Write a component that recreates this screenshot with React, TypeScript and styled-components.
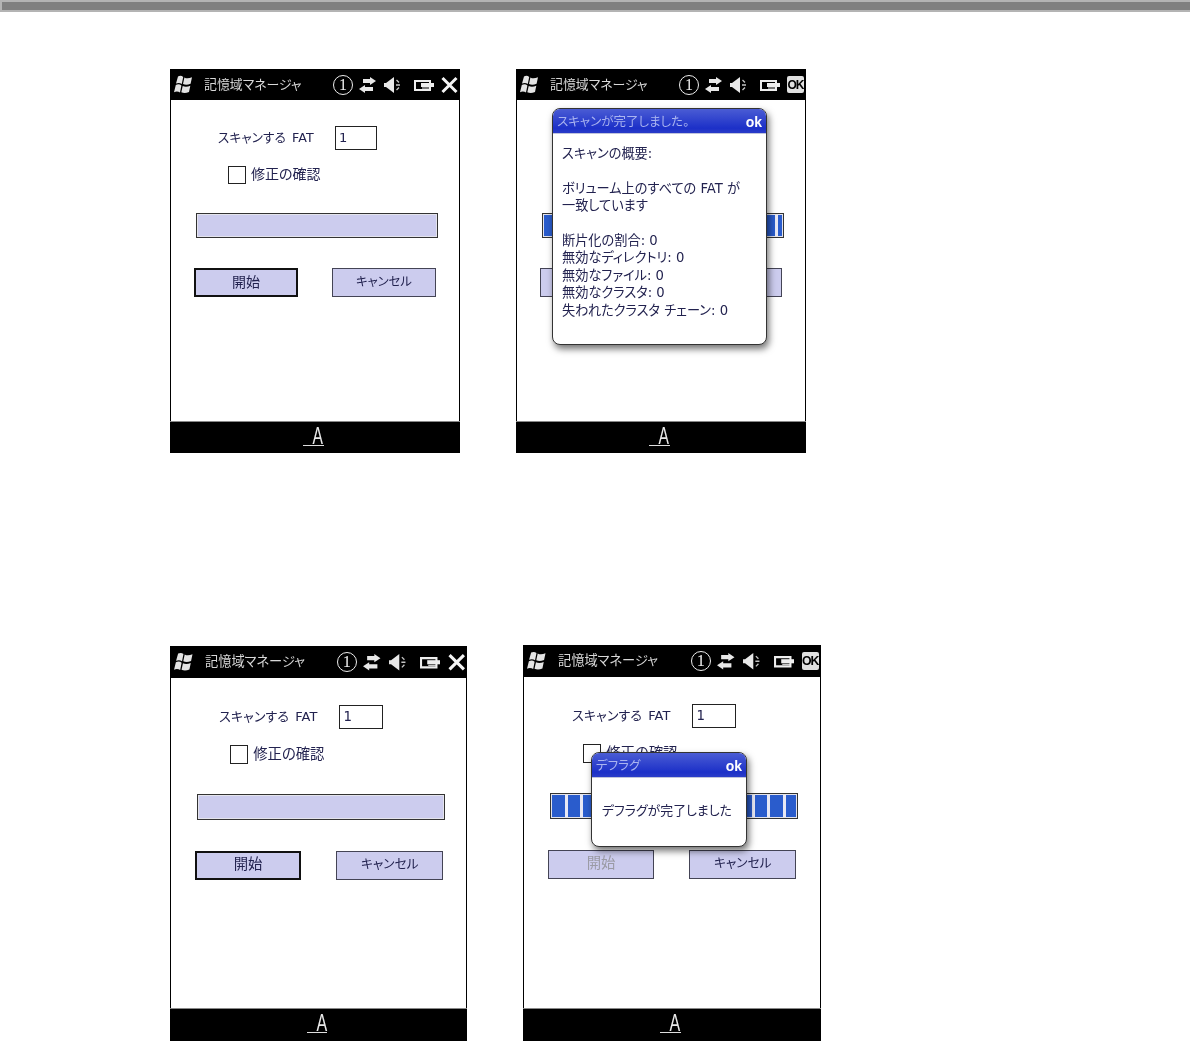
import React from 'react';
import styled, { createGlobalStyle, css } from 'styled-components';

const Global = createGlobalStyle`
  html, body { margin: 0; padding: 0; background: #fff; overflow: hidden; }
  body { font-family: "DejaVu Sans", "Noto Sans CJK JP", sans-serif; }
`;

const u = (n: number) => `calc(var(--s) * ${n}px)`;

const Page = styled.div`
  width: 1190px;
  height: 1041px;
  overflow: hidden;
`;
const TopBar = styled.div`
  height: 8px;
  background: #808080;
  border: 2px solid #b4b4b4;
  border-right: none;
`;
const PhoneRow = styled.div<{ $top: number; $gap: number }>`
  display: flex;
  align-items: flex-end;
  padding-left: 170px;
  margin-top: ${p => p.$top}px;
  gap: ${p => p.$gap}px;
`;
const Phone = styled.div<{ $w: number; $h: number; $s: number }>`
  --s: ${p => p.$s};
  position: relative;
  flex: none;
  display: flex;
  flex-direction: column;
  width: ${p => p.$w}px;
  height: ${p => p.$h}px;
  background: #fff;
  filter: blur(0.45px);
  font-feature-settings: "palt";
  font-size: ${u(14)};
  line-height: ${u(18)};
  color: #22224f;
`;
const Header = styled.div`
  flex: none;
  height: ${u(31)};
  background: #000;
  display: flex;
  align-items: center;
  color: #d8d8d8;
`;
const Flag = styled.svg`
  width: ${u(20)};
  height: ${u(19)};
  margin-left: ${u(3)};
`;
const Title = styled.span`
  margin-left: ${u(11)};
  flex: 1;
  font-size: ${u(12.9)};
  white-space: nowrap;
`;
const Circled = styled.span`
  box-sizing: border-box;
  width: ${u(20)};
  height: ${u(20)};
  border: 1.5px solid #eee;
  border-radius: 50%;
  display: flex;
  align-items: center;
  justify-content: center;
  color: #eee;
  font-family: "Liberation Serif", serif;
  font-size: ${u(16)};
  line-height: 1;
`;
const StatusIcon = styled.svg<{ $w: number; $ml: number; $mr?: number }>`
  width: ${p => u(p.$w)};
  height: ${u(18)};
  margin-left: ${p => u(p.$ml)};
  margin-right: ${p => u(p.$mr ?? 0)};
`;
const OkBadge = styled.span`
  width: ${u(17)};
  height: ${u(17)};
  margin: 0 ${u(2)} 0 ${u(7)};
  background: #e0e0e0;
  border-radius: 2px;
  color: #000;
  font: 700 ${u(12)} "Liberation Sans", sans-serif;
  letter-spacing: -1px;
  display: flex;
  align-items: center;
  justify-content: center;
`;
const Body = styled.div`
  flex: 1;
  min-height: 0;
  border-left: 1px solid #000;
  border-right: 1px solid #000;
  display: flex;
  flex-direction: column;
  align-items: flex-start;
`;
const FatRow = styled.div`
  display: flex;
  align-items: center;
  margin: ${u(26)} 0 0 ${u(47)};
  gap: ${u(21)};
`;
const FatLabel = styled.span`
  width: ${u(96)};
  white-space: nowrap;
  font-size: ${u(12.6)};
  word-spacing: ${u(2)};
  letter-spacing: 0.1px;
`;
const FatInput = styled.div`
  box-sizing: border-box;
  width: ${u(42)};
  height: ${u(24)};
  border: 1px solid #222;
  padding-left: ${u(3)};
  line-height: ${u(22)};
  font-size: ${u(13)};
`;
const CheckRow = styled.div`
  display: flex;
  align-items: center;
  margin: ${u(15)} 0 0 ${u(57)};
  gap: ${u(5)};
`;
const Check = styled.span`
  box-sizing: border-box;
  width: ${u(18)};
  height: ${u(18)};
  border: 1px solid #222;
  background: #fff;
`;
const CheckText = styled.span`
  padding-bottom: ${u(1)};
`;
const Progress = styled.div<{ $filled?: boolean }>`
  box-sizing: border-box;
  width: ${u(242)};
  height: ${u(25)};
  margin: ${u(29.4)} 0 0 ${u(25)};
  border: 1px solid #333;
  padding: 1px;
  background: #e4e4ec;
`;
const ProgressFill = styled.div<{ $filled?: boolean }>`
  height: 100%;
  ${p =>
    p.$filled
      ? css`
          background: repeating-linear-gradient(90deg, #2a5ccc 0 12.6px, #e8e8f4 12.6px 15.6px);
        `
      : css`
          background: #ccccee;
        `}
`;
const ButtonRow = styled.div`
  display: flex;
  margin: ${u(30)} 0 0 ${u(23)};
  gap: ${u(34)};
`;
const Button = styled.div<{ $focus?: boolean; $off?: boolean; $kana?: boolean }>`
  box-sizing: border-box;
  width: ${u(104)};
  height: ${u(29)};
  padding-bottom: ${u(2)};
  background: #ccccee;
  border: ${p => (p.$focus ? '2px solid #111' : '1px solid #444455')};
  display: flex;
  align-items: center;
  justify-content: center;
  font-size: ${p => (p.$kana ? u(12.4) : u(14))};
  color: ${p => (p.$off ? '#9a9aa4' : '#22224f')};
`;
const Bottom = styled.div`
  flex: none;
  height: ${u(32)};
  background: #000;
  border-top: 1px solid #888;
  box-sizing: border-box;
  display: flex;
  align-items: center;
  justify-content: center;
  padding: 0 ${u(3)} ${u(3)} 0;
`;
const Sip = styled.span`
  padding-left: ${u(7)};
  border-bottom: 1px solid #ddd;
  height: ${u(18)};
  display: flex;
`;
const SipLetter = styled.span`
  display: block;
  color: #e8e8e8;
  font: 400 ${u(23)}/${u(18)} "Liberation Sans", sans-serif;
  margin-right: ${u(-2)};
  transform: scaleX(0.68);
`;
const Dialog = styled.div<{ $l: number; $t: number; $w: number; $h: number }>`
  position: absolute;
  left: ${p => p.$l}px;
  top: ${p => p.$t}px;
  width: ${p => p.$w}px;
  height: ${p => p.$h}px;
  box-sizing: border-box;
  background: #fff;
  border: 1.5px solid #333;
  border-radius: 8px;
  box-shadow: 2px 4px 7px rgba(0, 0, 0, 0.55);
  overflow: hidden;
  display: flex;
  flex-direction: column;
`;
const DialogHead = styled.div`
  flex: none;
  height: 25px;
  background: linear-gradient(#4a5cd4, #1c30c8 80%, #2a3cc8);
  border-bottom: 1px solid #c0c4dc;
  box-sizing: border-box;
  padding: 2px 4px 0;
  display: flex;
  align-items: center;
  justify-content: space-between;
  color: #aab4f0;
  font-size: 12.5px;
`;
const DialogOk = styled.span`
  color: #fff;
  font: 700 14px "Liberation Sans", sans-serif;
`;
const Summary = styled.div`
  padding: 11px 0 0 9px;
  font-size: 13.2px;
  line-height: 17.4px;
`;
const Line = styled.div`
  height: 17.4px;
  white-space: nowrap;
`;
const Message = styled.div`
  flex: 1;
  display: flex;
  align-items: center;
  justify-content: center;
  font-size: 12.9px;
  padding: 0 4px 2px 0;
`;

const Form = ({ filled, off }: { filled?: boolean; off?: boolean }) => (
  <Body>
    <FatRow>
      <FatLabel>スキャンする FAT</FatLabel>
      <FatInput>1</FatInput>
    </FatRow>
    <CheckRow>
      <Check />
      <CheckText>修正の確認</CheckText>
    </CheckRow>
    <Progress $filled={filled}>
      <ProgressFill $filled={filled} />
    </Progress>
    <ButtonRow>
      <Button $focus={!off} $off={off}>開始</Button>
      <Button $kana>キャンセル</Button>
    </ButtonRow>
  </Body>
);

const StatusIcons = ({ ok }: { ok?: boolean }) => (
  <>
    <Circled>1</Circled>
    <StatusIcon $w={19} $ml={5} viewBox="0 0 19 18" fill="#e8e8e8">
      <path d="M12 1l6 4-6 4V7H5V3h7zM7 9v2h8v4H7v2l-6-4z" />
    </StatusIcon>
    <StatusIcon $w={18} $ml={6} viewBox="0 0 18 18" fill="#e8e8e8">
      <path d="M1 7h2l8-6v16l-8-6H1z" />
      <path d="M13.5 4l2.5 2.5M13 9h4M13.5 14l2.5-2.5" stroke="#c4c4c4" strokeWidth="1.3" fill="none" />
    </StatusIcon>
    <StatusIcon $w={21} $ml={12} viewBox="0 0 21 18" fill="none">
      <path d="M2 5h15v9H2z" stroke="#eee" strokeWidth="2" />
      <path d="M8 7h13v4H8z" fill="#eee" />
      <path d="M9 12h8" stroke="#eee" strokeWidth="1" />
    </StatusIcon>
    {ok ? (
      <OkBadge>OK</OkBadge>
    ) : (
      <StatusIcon $w={17} $ml={7} $mr={2} viewBox="0 0 17 18" fill="none">
        <path d="M1.5 2l14 14M15.5 2l-14 14" stroke="#f4f4f4" strokeWidth="3" />
      </StatusIcon>
    )}
  </>
);

const Head = ({ ok }: { ok?: boolean }) => (
  <Header>
    <Flag viewBox="0 0 20 19" fill="#e4e4e4">
      <path d="M5 1.5c1.8-1 3.8-.8 5.2.4L8.8 9C7.2 7.8 5 7.6 3 8.6zM11.4 2.4c2 1.2 4.4 1.1 7.6-.2l-1.4 6.6c-3 1.2-5.4 1.3-7.6.2zM2.8 10c1.9-1 4-.9 5.6.4L7 17.6c-1.6-1.2-3.8-1.4-6-.4zM9.7 10.9c2.2 1.1 4.6 1 7.6-.2L16 17c-3 1.2-5.4 1.3-7.7.2z" />
    </Flag>
    <Title>記憶域マネージャ</Title>
    <StatusIcons ok={ok} />
  </Header>
);

const Foot = () => (
  <Bottom>
    <Sip>
      <SipLetter>A</SipLetter>
    </Sip>
  </Bottom>
);

export default function App() {
  return (
    <Page>
      <Global />
      <TopBar />
      <PhoneRow $top={57} $gap={56}>
        <Phone $w={290} $h={384} $s={1}>
          <Head />
          <Form />
          <Foot />
        </Phone>
        <Phone $w={290} $h={384} $s={1}>
          <Head ok />
          <Form filled off />
          <Foot />
          <Dialog $l={36} $t={39} $w={215} $h={237}>
            <DialogHead>
              <span>スキャンが完了しました。</span>
              <DialogOk>ok</DialogOk>
            </DialogHead>
            <Summary>
              <Line>スキャンの概要:</Line>
              <Line />
              <Line>ボリューム上のすべての FAT が</Line>
              <Line>一致しています</Line>
              <Line />
              <Line>断片化の割合: 0</Line>
              <Line>無効なディレクトリ: 0</Line>
              <Line>無効なファイル: 0</Line>
              <Line>無効なクラスタ: 0</Line>
              <Line>失われたクラスタ チェーン: 0</Line>
            </Summary>
          </Dialog>
        </Phone>
      </PhoneRow>
      <PhoneRow $top={192} $gap={56}>
        <Phone $w={297} $h={395} $s={1.027}>
          <Head />
          <Form />
          <Foot />
        </Phone>
        <Phone $w={298} $h={396} $s={1.027}>
          <Head ok />
          <Form filled off />
          <Foot />
          <Dialog $l={68} $t={107} $w={156} $h={95}>
            <DialogHead>
              <span>デフラグ</span>
              <DialogOk>ok</DialogOk>
            </DialogHead>
            <Message>デフラグが完了しました</Message>
          </Dialog>
        </Phone>
      </PhoneRow>
    </Page>
  );
}
